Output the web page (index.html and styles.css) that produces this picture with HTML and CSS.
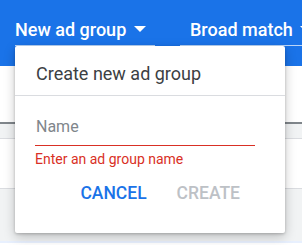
FILE: index.html
```html
<!DOCTYPE html>
<html lang="en">
<head>
  <meta charset="UTF-8" />
  <title>Ad groups</title>
  <link rel="stylesheet" href="styles.css">
</head>
<body>

  <header class="topbar">
    <nav class="tabs">
      <div class="tab tab-first">New ad group <span class="caret"></span></div>
      <div class="tab tab-second">Broad match <span class="caret"></span></div>
    </nav>
    <div class="band"></div>
  </header>

  <main class="table">
    <div class="row row-blank"></div>
    <div class="row row-head"></div>
    <div class="row row-white"></div>
    <div class="row row-grey"></div>
  </main>

  <div class="dialog">
    <div class="dialog-title">Create new ad group</div>
    <div class="dialog-body">
      <div class="field">
        <input class="field-input" type="text" placeholder="Name" />
      </div>
      <div class="field-error">Enter an ad group name</div>
    </div>
    <div class="dialog-actions">
      <button class="btn btn-primary">CANCEL</button>
      <button class="btn btn-disabled">CREATE</button>
    </div>
  </div>

</body>
</html>
```

FILE: styles.css
```css
* {
  box-sizing: border-box;
  margin: 0;
  padding: 0;
  font-family: Roboto, 'Liberation Sans', sans-serif;
}

body {
  width: 302px;
  height: 245px;
  overflow: hidden;
  background-color: white;
  position: relative;
}

.topbar {
  background-color: #1a73e8;
}

.tabs {
  display: flex;
  height: 46px;
  padding-left: 15px;
  white-space: nowrap;
  overflow: hidden;
}

.tab {
  flex-shrink: 0;
  color: white;
  font-size: 18px;
  font-weight: 500;
  line-height: 24px;
  padding-top: 18px;
  border-bottom: 1px solid rgba(255, 255, 255, 0.7);
}

.tab-first {
  width: 140px;
}

.tab-second {
  margin-left: 25px;
  padding-left: 10px;
  width: 130px;
}

.caret {
  display: inline-block;
  width: 0;
  height: 0;
  margin-left: 3px;
  vertical-align: middle;
  border-left: 6px solid transparent;
  border-right: 6px solid transparent;
  border-top: 6px solid white;
  position: relative;
  top: -2px;
}

.band {
  height: 20px;
}

.table {
  display: flex;
  flex-direction: column;
}

.row-blank {
  height: 58px;
  background: white;
  border-bottom: 2px solid #80868b;
}

.row-head {
  height: 15px;
  background: #f1f3f4;
  border-bottom: 1px solid #dadce0;
}

.row-white {
  height: 50px;
  background: white;
  border-bottom: 1px solid #dadce0;
}

.row-grey {
  height: 54px;
  background: #f1f3f4;
  border-bottom: 2px solid #e8f0fe;
}

.dialog {
  position: absolute;
  left: 15px;
  top: 46px;
  width: 270px;
  height: 187px;
  background: white;
  border-radius: 2px;
  box-shadow: 0 4px 12px rgba(0, 0, 0, 0.22), 0 1px 3px rgba(0, 0, 0, 0.2);
}

.dialog-title {
  height: 50px;
  padding: 16px 0 0 21px;
  font-size: 18px;
  line-height: 24px;
  color: #3c4043;
  border-bottom: 1px solid #dadce0;
}

.dialog-body {
  padding: 0 30px 0 20px;
}

.field {
  padding-top: 20px;
  border-bottom: 1px solid #d93025;
}

.field-input {
  display: block;
  width: 100%;
  border: none;
  outline: none;
  font-size: 16px;
  line-height: 20px;
  height: 29px;
  padding: 0 0 9px 1px;
  color: #3c4043;
  background: transparent;
}

.field-input::placeholder {
  color: #80868b;
}

.field-error {
  margin-top: 5px;
  font-size: 14px;
  line-height: 16px;
  color: #d93025;
}

.dialog-actions {
  display: flex;
  justify-content: flex-end;
  padding: 14px 30px 0 0;
}

.btn {
  background: none;
  border: none;
  font-size: 17.5px;
  font-weight: 500;
  line-height: 24px;
  padding: 0 15px;
  cursor: pointer;
}

.btn-primary {
  color: #1a73e8;
}

.btn-disabled {
  color: #bdc1c6;
  cursor: default;
}
```
